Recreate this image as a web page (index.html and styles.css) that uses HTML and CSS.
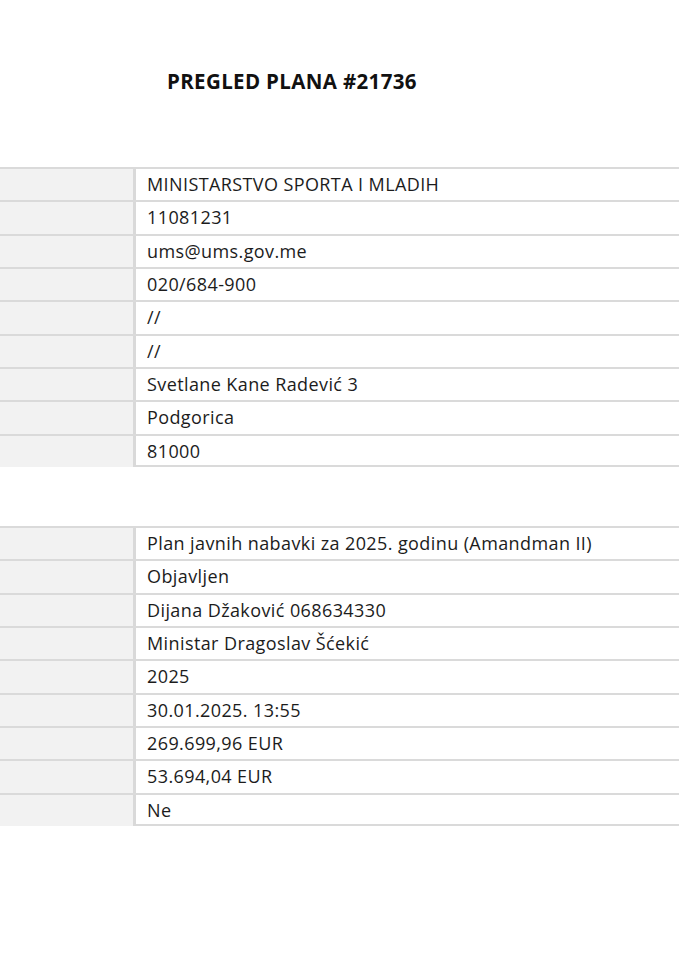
FILE: index.html
```html
<!DOCTYPE html>
<html>
<head>
<meta charset="utf-8">
<link rel="stylesheet" href="styles.css">
</head>
<body>
<div class="page">
  <h1 class="title">PREGLED PLANA #21736</h1>
  <div class="table first">
    <div class="row"><div class="label"></div><div class="value">MINISTARSTVO SPORTA I MLADIH</div></div>
    <div class="row"><div class="label"></div><div class="value">11081231</div></div>
    <div class="row"><div class="label"></div><div class="value">ums@ums.gov.me</div></div>
    <div class="row"><div class="label"></div><div class="value">020/684-900</div></div>
    <div class="row"><div class="label"></div><div class="value">//</div></div>
    <div class="row"><div class="label"></div><div class="value">//</div></div>
    <div class="row"><div class="label"></div><div class="value">Svetlane Kane Radević 3</div></div>
    <div class="row"><div class="label"></div><div class="value">Podgorica</div></div>
    <div class="row"><div class="label"></div><div class="value">81000</div></div>
  </div>
  <div class="table second">
    <div class="row"><div class="label"></div><div class="value">Plan javnih nabavki za 2025. godinu (Amandman II)</div></div>
    <div class="row"><div class="label"></div><div class="value">Objavljen</div></div>
    <div class="row"><div class="label"></div><div class="value">Dijana Džaković 068634330</div></div>
    <div class="row"><div class="label"></div><div class="value">Ministar Dragoslav Šćekić</div></div>
    <div class="row"><div class="label"></div><div class="value">2025</div></div>
    <div class="row"><div class="label"></div><div class="value">30.01.2025. 13:55</div></div>
    <div class="row"><div class="label"></div><div class="value">269.699,96 EUR</div></div>
    <div class="row"><div class="label"></div><div class="value">53.694,04 EUR</div></div>
    <div class="row"><div class="label"></div><div class="value">Ne</div></div>
  </div>
</div>
</body>
</html>
```
FILE: styles.css
```css
html, body {
  margin: 0;
  padding: 0;
  background: #ffffff;
}
.page {
  width: 679px;
  height: 960px;
  overflow: hidden;
  font-family: "Open Sans", Lato, "Liberation Sans", sans-serif;
  color: #1c1c1c;
}
.title {
  margin: 0;
  padding: 68px 0 0 167px;
  height: 167px;
  box-sizing: border-box;
  font-size: 20.5px;
  line-height: 27px;
  letter-spacing: 0.35px;
  font-weight: 700;
  color: #111111;
}
.table {
  border-top: 2px solid #dadada;
}
.second {
  margin-top: 59px;
}
.row {
  display: grid;
  grid-template-columns: 136px 1fr;
  height: 33.333px;
  box-sizing: border-box;
  border-bottom: 2px solid #dadada;
}
.row:last-child {
  height: 31.333px;
}
.label {
  background: #f2f2f2;
  border-right: 3px solid #d9d9d9;
}
.value {
  padding-left: 11px;
  font-size: 18px;
  line-height: 31px;
  letter-spacing: 0.4px;
  white-space: nowrap;
}
```
